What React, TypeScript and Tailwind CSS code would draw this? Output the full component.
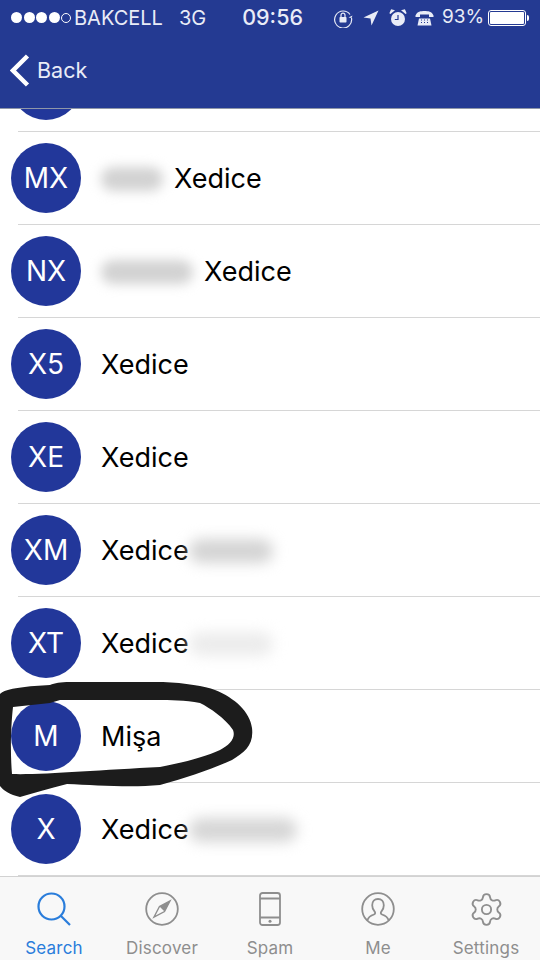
import { Settings } from 'lucide-react';
import type { ReactNode } from 'react';

interface Contact {
  initials: string;
  name: string;
  leadSmudge?: string;
  tailSmudge?: string;
}

const contacts: Contact[] = [
  { initials: '', name: '' },
  { initials: 'MX', name: 'Xedice', leadSmudge: 'w-[62px]' },
  { initials: 'NX', name: 'Xedice', leadSmudge: 'w-[92px]' },
  { initials: 'X5', name: 'Xedice' },
  { initials: 'XE', name: 'Xedice' },
  { initials: 'XM', name: 'Xedice', tailSmudge: 'w-[84px] bg-[#d4d4d4]' },
  { initials: 'XT', name: 'Xedice', tailSmudge: 'w-[84px] bg-[#ececec]' },
  { initials: 'M', name: 'Mişa' },
  { initials: 'X', name: 'Xedice', tailSmudge: 'w-[108px] bg-[#d6d6d6]' },
];

function ContactRow({ contact }: { contact: Contact }) {
  return (
    <div className="h-[93px] shrink-0 pl-[11px] flex items-center relative">
      <div className="w-[70px] h-[70px] mb-[2px] rounded-full bg-[#22379a] text-white text-[28px] flex items-center justify-center shrink-0">
        {contact.initials}
      </div>
      <div className="ml-[20px] mb-[-1px] flex items-center text-[27px] text-black">
        {contact.leadSmudge && (
          <div className={`${contact.leadSmudge} h-[24px] mr-[11px] rounded-full bg-[#d2d2d2] blur-[6px]`} />
        )}
        <span>{contact.name}</span>
        {contact.tailSmudge && (
          <div className={`${contact.tailSmudge} h-[24px] rounded-full blur-[7px]`} />
        )}
      </div>
      <div className="absolute left-[18px] right-0 bottom-0 h-px bg-[#d6d6d6]" />
    </div>
  );
}

function TabItem({ label, active, children }: { label: string; active?: boolean; children: ReactNode }) {
  return (
    <div className={`flex-1 flex flex-col items-center ${active ? 'text-[#2a7ddb]' : 'text-[#8e8e8e]'}`}>
      <div className="h-[34px] mt-[15px] flex items-center justify-center">{children}</div>
      <span className="text-[17px] leading-[20px] mt-[12px] tracking-[0.2px]">{label}</span>
    </div>
  );
}

export default function App() {
  return (
    <div className="w-[540px] h-[960px] bg-white relative overflow-hidden flex flex-col font-['Inter','Liberation_Sans',sans-serif]">
      <header className="h-[109px] shrink-0 bg-[#243a92] text-[#e9ecf7] border-b border-[#8f97a8] relative z-10">
        <div className="h-[35px] flex items-center text-[20px] pl-[11px]">
          <div className="flex items-center gap-[1.5px]">
            <span className="w-[11px] h-[11px] rounded-full bg-white" />
            <span className="w-[11px] h-[11px] rounded-full bg-white" />
            <span className="w-[11px] h-[11px] rounded-full bg-white" />
            <span className="w-[11px] h-[11px] rounded-full bg-white" />
            <span className="w-[10px] h-[10px] rounded-full border border-white" />
          </div>
          <span className="ml-[3px]">BAKCELL</span>
          <span className="ml-[16px]">3G</span>
          <span className="ml-[36px] text-[21.5px] font-medium">09:56</span>
          <svg className="ml-[30px]" width="20" height="20" viewBox="0 0 20 20" fill="none" stroke="currentColor">
            <path d="M17 6.500A8.500 8.500 0 1 0 18.500 10" strokeWidth="1.2" />
            <path d="M15.500 9.500l3 0.500 1-2.500z" fill="currentColor" stroke="none" />
            <rect x="6.500" y="9" width="7" height="5.500" rx="0.700" fill="currentColor" stroke="none" />
            <path d="M8 9V7.200a2 2 0 0 1 4 0V9" strokeWidth="1.2" />
          </svg>
          <svg className="ml-[10px]" width="16" height="16" viewBox="0 0 16 16" fill="currentColor">
            <path d="M15.500 0.500L0.500 7.500l7 1 1 7z" />
          </svg>
          <svg className="ml-[10px]" width="18" height="18" viewBox="0 0 18 18" fill="currentColor">
            <circle cx="9" cy="10" r="7" />
            <path d="M1 4.500L4.500 1.500 2.500 1zM17 4.500L13.500 1.500 15.500 1z" stroke="currentColor" strokeWidth="1.4" />
            <path d="M9 6v4.500H5.800" fill="none" stroke="#243a92" strokeWidth="1.2" />
          </svg>
          <svg className="ml-[8px]" width="19" height="16" viewBox="0 0 19 16" fill="currentColor">
            <path d="M0.500 5.500C2 1.500 6 1 9.500 1s7.500 0.500 9 4.500v1.500h-4.500V4.500h-9V7H0.500z" />
            <path d="M4 8.500h11l1.500 7h-14z" />
            <path d="M6 10h1M9 10h1M12 10h1M6 12.500h1M9 12.500h1M12 12.500h1" stroke="#243a92" strokeWidth="1.2" />
          </svg>
          <span className="ml-[8px] text-[19px]">93%</span>
          <div className="ml-[4px] w-[38px] h-[16px] rounded-[3px] border border-white p-[1px]">
            <div className="w-full h-full bg-white rounded-[1px]" />
          </div>
          <div className="w-[2px] h-[6px] ml-px bg-white rounded-r-sm" />
        </div>
        <div className="h-[70px] flex items-center pl-[10px]">
          <svg width="20" height="33" viewBox="0 0 20 33" fill="none" stroke="white" strokeWidth="4.5">
            <path d="M17.500 2L3 16.500 17.500 31" />
          </svg>
          <span className="ml-[7px] text-[21.5px]">Back</span>
        </div>
      </header>

      <div className="flex-1 min-h-0 overflow-hidden flex flex-col">
        <div className="flex flex-col -mt-[70px]">
          {contacts.map((contact, i) => (
            <ContactRow key={i} contact={contact} />
          ))}
        </div>
      </div>

      <nav className="h-[84px] shrink-0 bg-[#f8f8f8] border-t border-[#d2d2d2] flex relative">
        <TabItem label="Search" active>
          <svg width="34" height="34" viewBox="0 0 34 34" fill="none" stroke="currentColor" strokeWidth="2.2">
            <circle cx="14.500" cy="14.500" r="13" />
            <path d="M24 24l9 9" />
          </svg>
        </TabItem>
        <TabItem label="Discover">
          <svg width="34" height="34" viewBox="0 0 34 34" fill="none" stroke="currentColor" strokeWidth="1.8">
            <circle cx="17" cy="17" r="15.800" />
            <path d="M25 9L19.500 19.500 9 25l5.500-10.500z" strokeWidth="1.4" />
            <path d="M25 9L14.500 14.500 19.500 19.500z" fill="currentColor" stroke="none" />
          </svg>
        </TabItem>
        <TabItem label="Spam">
          <svg width="22" height="34" viewBox="0 0 22 34" fill="none" stroke="currentColor" strokeWidth="1.8">
            <rect x="1" y="1" width="20" height="32" rx="2.500" />
            <path d="M1 6.500h20M1 25.500h20" />
            <circle cx="11" cy="29.300" r="1.500" fill="currentColor" stroke="none" />
          </svg>
        </TabItem>
        <TabItem label="Me">
          <svg width="34" height="34" viewBox="0 0 34 34" fill="none" stroke="currentColor" strokeWidth="1.8">
            <circle cx="17" cy="17" r="15.800" />
            <path d="M6.500 28c1-3.500 3.500-4.500 6.500-5.500 1.500-.5 1.500-2 .5-3.200-1.600-1.800-2.300-4-2.300-6.100C11.200 9.500 13.500 7 17 7s5.800 2.500 5.800 6.200c0 2.100-.7 4.300-2.300 6.100-1 1.200-1 2.700.5 3.200 3 1 5.500 2 6.500 5.500" />
          </svg>
        </TabItem>
        <TabItem label="Settings">
          <Settings size={37} strokeWidth={1.2} />
        </TabItem>
      </nav>

      {/* marker scribble drawn over the Misa row */}
      <svg className="absolute left-0 top-[680px] z-20" width="256" height="120" viewBox="0 680 256 120" fill="#1c1c1c" fillRule="evenodd">
        <path d="M0 694C5 688 30 686 50 685C55 683 60 682 70 682L163 682C185 683 205 686 215 690C235 698 250 712 252 728C254 745 245 752 232 760C210 770 185 778 160 785C130 788 95 785 67 784C50 788 35 793 20 797C10 795 3 790 0 786Z M13 707C11 725 10 750 12 774C40 775 100 770 160 767C185 762 205 757 220 750C230 745 236 738 233 730C225 718 210 708 200 703C185 700 170 700 157 700L60 700L50 703Z" />
      </svg>
    </div>
  );
}
